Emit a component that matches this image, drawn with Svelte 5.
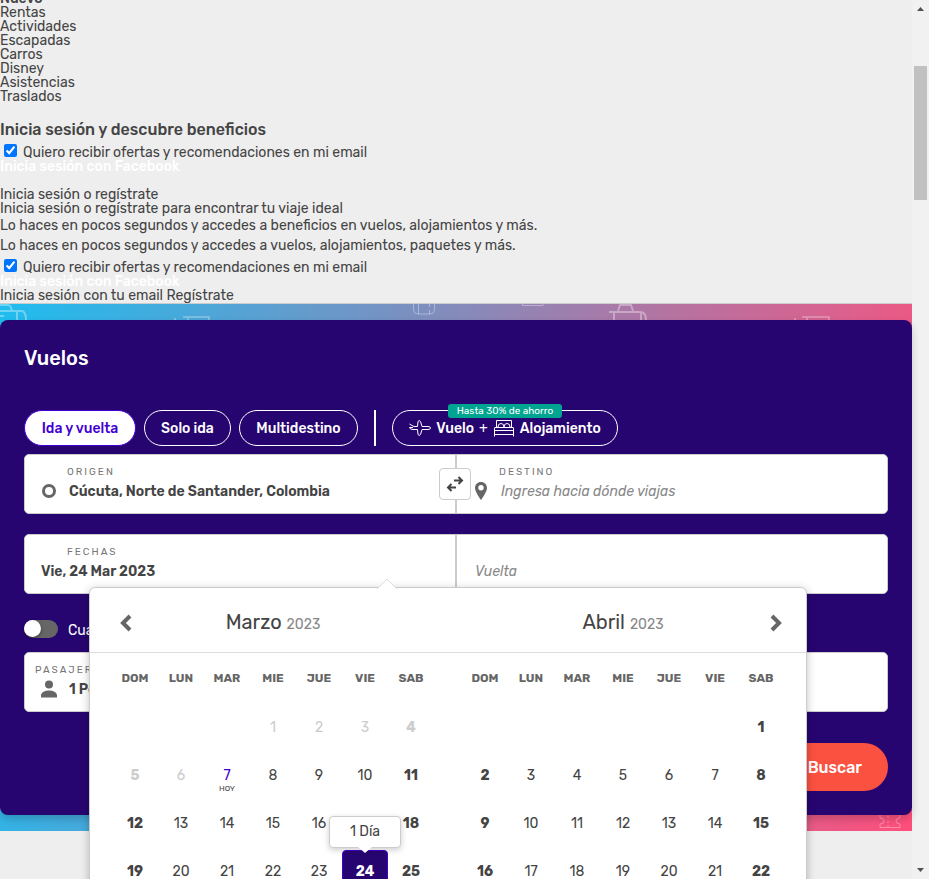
<script>
  const products = ['Rentas', 'Actividades', 'Escapadas', 'Carros', 'Disney', 'Asistencias', 'Traslados'];
  const weekdays = ['DOM', 'LUN', 'MAR', 'MIE', 'JUE', 'VIE', 'SAB'];

  // offset: how many empty cells come before day 1
  function buildWeeks(offset, count) {
    return Array.from({ length: count }, (_, w) =>
      Array.from({ length: 7 }, (_, d) => {
        const day = w * 7 + d - offset + 1;
        return day > 0 ? day : null;
      })
    );
  }

  const months = [
    { name: 'Marzo', year: 2023, weeks: buildWeeks(3, 4), today: 7 },
    { name: 'Abril', year: 2023, weeks: buildWeeks(6, 4), today: 0 }
  ];

  let selected = $state(24);
  let origin = $state('Cúcuta, Norte de Santander, Colombia');
  let departure = $state('Vie, 24 Mar 2023');
  let passengers = $state('1 Persona');
</script>

<div class="window">
  <div class="page">
    <nav>
      <ul class="products">
        <li><strong>Nuevo</strong></li>
        {#each products as product}
          <li>{product}</li>
        {/each}
      </ul>
    </nav>

    <section class="login">
      <h2>Inicia sesión y descubre beneficios</h2>
      <label class="check"><input type="checkbox" checked /><span>Quiero recibir ofertas y recomendaciones en mi email</span></label>
      <a class="facebook" href="#facebook">Inicia sesión con Facebook</a>
      <div class="register">
        <div>Inicia sesión o regístrate</div>
        <div>Inicia sesión o regístrate para encontrar tu viaje ideal</div>
        <p>Lo haces en pocos segundos y accedes a beneficios en vuelos, alojamientos y más.</p>
        <p>Lo haces en pocos segundos y accedes a vuelos, alojamientos, paquetes y más.</p>
      </div>
      <label class="check"><input type="checkbox" checked /><span>Quiero recibir ofertas y recomendaciones en mi email</span></label>
      <a class="facebook" href="#facebook">Inicia sesión con Facebook</a>
      <div class="plain"><a href="#email">Inicia sesión con tu email</a> <a href="#registro">Regístrate</a></div>
    </section>

    <main class="banner">
      <svg class="pattern top" width="912" height="16" viewBox="0 0 912 16" aria-hidden="true">
        <path d="M0 1H8Q11 1 12 7M0 7H22Q26 8 26 16M17 8V16M0 12H4" />
        <path d="M183 13H209V16M188 13V16M175 16V14" stroke-width="1.6" />
        <path d="M413.500 0V6Q414 10 418 10H430Q434 10 434.500 6V0M418.500 0V10M429.500 0V3M429.500 6V10" stroke-width="1" />
        <path d="M522.500 0V1.500H543V0" stroke-width="1" />
        <path d="M609 8H640Q646 8 646 16M618 7L620 1H631L633 7M614 8V16M641 9V16" />
        <path d="M802 13H829V16M807 13V16M795 16V14" stroke-width="1.6" />
      </svg>
      <svg class="pattern bottom" width="22" height="14" viewBox="0 0 22 14" aria-hidden="true">
        <path d="M1 0V3Q5 3 5 6T1 9V12.500H21V9Q17 9 17 6T21 3V0M9 1V3M9 6V8M9 10V12" stroke-width="1" />
      </svg>

      <form class="panel" onsubmit={(e) => e.preventDefault()}>
        <h1>Vuelos</h1>
        <div class="tabs">
          <button type="button" class="tab active">Ida y vuelta</button>
          <button type="button" class="tab one-way">Solo ida</button>
          <button type="button" class="tab multi">Multidestino</button>
          <span class="bar"></span>
          <button type="button" class="tab combo">
            <span class="saving">Hasta 30% de ahorro</span>
            <svg width="22" height="18" viewBox="0 0 22 18" aria-hidden="true">
              <path d="M.5 5L3 6.500 5 7.500H8.500L9 2.500Q10 .500 11.500 2.500L13 7.500H19Q21.500 7.500 21.500 9T19 10.500H13L11.500 15.500Q10 17.500 9 15.500L8.500 10.500H4Q1 10.500 .5 8.500H4" />
            </svg>
            <b>Vuelo</b><i>+</i>
            <svg class="bed" width="22" height="18" viewBox="0 0 22 18" aria-hidden="true">
              <path d="M3.500 8V1.500H18.500V8M1.500 17.500V9Q1.500 8.500 2 8.500H20Q20.500 8.500 20.500 9V17.500M1.500 11.500H20.500M1.500 15.500H20.500M5 8Q5 4.500 8 4.500T11 8Q11 4.500 14 4.500T17 8" />
            </svg>
            <b>Alojamiento</b>
          </button>
        </div>

        <div class="fields">
          <div class="field">
            <label for="origin">ORIGEN</label>
            <div class="row">
              <svg width="16" height="16" viewBox="0 0 16 16" aria-hidden="true"><circle cx="8" cy="8" r="5.500" fill="none" stroke="#666" stroke-width="3" /></svg>
              <input id="origin" type="text" bind:value={origin} />
            </div>
          </div>
          <div class="field destination">
            <label for="destination">DESTINO</label>
            <div class="row">
              <svg width="16" height="20" viewBox="0 0 16 20" aria-hidden="true"><path d="M8 1C4.500 1 2 3.600 2 7C2 11 8 19 8 19S14 11 14 7C14 3.600 11.500 1 8 1ZM8 4A2.700 2.700 0 1 1 8 9.400A2.700 2.700 0 1 1 8 4Z" fill="#666" fill-rule="evenodd" /></svg>
              <input id="destination" type="text" placeholder="Ingresa hacia dónde viajas" />
            </div>
          </div>
          <button type="button" class="swap" aria-label="Intercambiar">
            <svg width="18" height="18" viewBox="0 0 18 18" aria-hidden="true"><path d="M8 5.500H16M12.500 2L16 5.500L12.500 9M10 12.500H2M5.500 9L2 12.500L5.500 16" fill="none" stroke="#444" stroke-width="2" /></svg>
          </button>
        </div>

        <div class="fields dates">
          <div class="field">
            <label for="departure">FECHAS</label>
            <div class="row"><input id="departure" type="text" bind:value={departure} /></div>
          </div>
          <div class="field return">
            <div class="row"><input type="text" placeholder="Vuelta" aria-label="Vuelta" /></div>
          </div>

          <div class="calendar">
            <svg class="notch" width="20" height="11" viewBox="0 0 20 11" aria-hidden="true"><path d="M0 11L10 1L20 11" fill="#fff" stroke="#ddd" /></svg>
            <div class="calendar-head">
              <button type="button" class="arrow" aria-label="Mes anterior"><svg width="12" height="18" viewBox="0 0 12 18"><path d="M10 2L3 9L10 16" /></svg></button>
              {#each months as month}
                <h3>{month.name} <small>{month.year}</small></h3>
              {/each}
              <button type="button" class="arrow next" aria-label="Mes siguiente"><svg width="12" height="18" viewBox="0 0 12 18"><path d="M2 2L9 9L2 16" /></svg></button>
            </div>
            <div class="months">
              {#each months as month, m}
                <table>
                  <thead>
                    <tr>{#each weekdays as name}<th scope="col">{name}</th>{/each}</tr>
                  </thead>
                  <tbody>
                    {#each month.weeks as week}
                      <tr>
                        {#each week as day, d}
                          <td>
                            {#if day}
                              <button
                                type="button"
                                class="day"
                                class:weekend={d === 0 || d === 6}
                                class:past={day < month.today}
                                class:today={day === month.today}
                                class:selected={m === 0 && day === selected}
                                disabled={day < month.today}
                                onclick={() => { if (m === 0) selected = day; }}
                              >{day}</button>
                              {#if day === month.today}<span class="hoy">HOY</span>{/if}
                              {#if m === 0 && day === selected}
                                <span class="tip">1 Día</span>
                              {/if}
                            {/if}
                          </td>
                        {/each}
                      </tr>
                    {/each}
                  </tbody>
                </table>
              {/each}
            </div>
          </div>
        </div>

        <label class="switch"><input type="checkbox" /><span>Cualquier fecha</span></label>

        <div class="fields">
          <div class="field passengers">
            <label for="passengers">PASAJEROS Y CLASE</label>
            <div class="row">
              <svg width="18" height="18" viewBox="0 0 18 18" aria-hidden="true"><circle cx="9" cy="4.500" r="4" fill="#666" /><path d="M1 17.500V15Q2 10.500 9 10.500T17 15V17.500Z" fill="#666" /></svg>
              <input id="passengers" type="text" bind:value={passengers} />
            </div>
          </div>
        </div>

        <div class="actions"><button type="submit" class="search">Buscar</button></div>
      </form>
    </main>
  </div>

  <div class="scroll" aria-hidden="true">
    <svg width="17" height="17" viewBox="0 0 17 17"><path d="M5 11L8.500 7L12 11Z" fill="#505050" /></svg>
    <div class="track"><div class="thumb"></div></div>
    <svg width="17" height="17" viewBox="0 0 17 17"><path d="M5 6L8.500 10L12 6Z" fill="#505050" /></svg>
  </div>
</div>

<style>
  .window {
    display: flex;
    height: 100vh;
    overflow: hidden;
    background: #eee;
    color: #444;
    font: 14px/14px Rubik, Roboto, sans-serif;
  }
  .page { flex: 1; min-width: 0; }
  .window :is(button, input) { font-family: inherit; box-sizing: border-box; }
  a { color: inherit; text-decoration: none; }

  .products { list-style: none; margin: -8px 0 0; padding: 0; }
  .products strong { font-weight: 500; }

  h2 { margin: 16px 0 4px; font-size: 16px; line-height: 20px; font-weight: 500; }
  .check { display: flex; gap: 6px; height: 16px; line-height: 18px; }
  .check input { width: 13px; height: 13px; margin: 0 0 0 4px; }
  .facebook { display: block; color: #fff; font-weight: 500; }
  .register { margin: 14px 0 3px; }
  .register p { margin: 0; line-height: 20px; }

  .banner {
    position: relative;
    padding: 16px 0;
    border-top: 1px solid #ccc;
    background: linear-gradient(100deg, #1fbdf0, #ff4f7b);
  }
  .pattern { position: absolute; fill: none; stroke: rgba(255, 255, 255, .35); stroke-width: 2; }
  .top { top: 0; left: 0; }
  .bottom { right: 11px; bottom: 2px; }

  .panel {
    position: relative;
    padding: 26px 24px 24px;
    border-radius: 8px;
    background: #270570;
    box-shadow: 0 4px 8px rgba(0, 0, 0, .18);
  }
  h1 { margin: 0 0 40px; color: #fff; font-size: 20px; line-height: 24px; font-weight: 500; }

  .tabs { display: flex; gap: 8px; margin-bottom: 8px; }
  .tab {
    position: relative;
    display: flex;
    align-items: center;
    justify-content: center;
    height: 36px;
    padding: 0;
    border: 1px solid #fff;
    border-radius: 18px;
    background: none;
    color: #fff;
    font-size: 14px;
    font-weight: 500;
  }
  .active { width: 112px; background: #fff; border-color: #4300d2; color: #4300d2; }
  .one-way { width: 87px; }
  .multi { width: 119px; }
  .bar { width: 2px; margin: 0 8px; background: #fff; }
  .combo { width: 226px; gap: 5px; }
  .combo svg { fill: none; stroke: #fff; }
  .combo b { font-weight: 500; }
  .combo i { font-style: normal; font-weight: 400; }
  .saving {
    position: absolute;
    top: -7px;
    left: 50%;
    width: 114px;
    transform: translateX(-50%);
    border-radius: 3px;
    background: #00a591;
    font-size: 10px;
    font-weight: 400;
    line-height: 14px;
  }

  .fields {
    position: relative;
    display: flex;
    height: 58px;
    border: 1px solid #ccc;
    border-radius: 5px;
    background: #fff;
  }
  .dates { margin: 20px 0 26px; }
  .field { flex: 1; min-width: 0; padding: 11px 0 0 16px; }
  .field + .field { border-left: 2px solid #ccc; }
  .field label {
    display: block;
    margin-left: 26px;
    color: #777;
    font-size: 10px;
    line-height: 12px;
    letter-spacing: 2px;
  }
  .field .row { display: flex; align-items: center; height: 26px; gap: 12px; }
  .field input {
    flex: 1;
    min-width: 0;
    padding: 0;
    border: 0;
    outline: 0;
    background: none;
    color: #444;
    font-size: 14px;
    font-weight: 600;
  }
  .field input::placeholder { color: #888; opacity: 1; font-weight: 400; font-style: italic; }
  .return .row { padding: 12px 0 0 2px; }
  .passengers { padding-left: 10px; }
  .passengers label { margin-left: 0; }
  .passengers .row { padding-left: 5px; gap: 11px; }

  .swap {
    position: absolute;
    top: 13px;
    left: calc(50% - 17px);
    display: grid;
    place-items: center;
    width: 32px;
    height: 32px;
    padding: 0;
    border: 1px solid #ccc;
    border-radius: 4px;
    background: #fff;
  }

  .calendar {
    position: absolute;
    z-index: 2;
    top: 52px;
    left: 64px;
    width: 716px;
    border: 1px solid #ccc;
    border-radius: 6px;
    background: #fff;
    box-shadow: 0 2px 8px rgba(0, 0, 0, .25);
  }
  .notch { position: absolute; top: -10px; left: 287px; }
  .calendar-head {
    position: relative;
    display: flex;
    gap: 28px;
    padding: 0 22px;
    border-bottom: 1px solid #ddd;
  }
  h3 { flex: 1; height: 64px; margin: 0; padding-top: 2px; box-sizing: border-box; font-size: 20px; font-weight: 400; line-height: 64px; text-align: center; }
  h3 small { color: #888; font-size: 14px; }
  .arrow { position: absolute; top: 23px; left: 24px; height: 24px; padding: 0 6px; border: 0; background: none; }
  .next { left: auto; right: 18px; }
  .arrow svg { display: block; fill: none; stroke: #666; stroke-width: 4; }

  .months { display: flex; gap: 28px; padding: 0 22px; }
  table { flex: 1; width: 322px; table-layout: fixed; border-collapse: collapse; }
  th { height: 50px; padding: 0; color: #666; font-size: 12px; font-weight: 700; }
  td { position: relative; height: 48px; padding: 0; text-align: center; }
  .day {
    display: block;
    width: 100%;
    height: 42px;
    padding: 0;
    border: 0;
    border-radius: 4px;
    background: none;
    color: #444;
    font-size: 14px;
  }
  .weekend { font-weight: 700; }
  .past { color: #ccc; }
  .today { color: #4300d2; }
  .selected { border: 1px solid #4300d2; background: #270570; color: #fff; font-weight: 700; }
  .hoy { position: absolute; right: 0; bottom: 5px; left: 0; font-size: 8px; line-height: 10px; }
  .tip {
    position: absolute;
    bottom: 47px;
    left: 50%;
    width: 70px;
    transform: translateX(-50%);
    border: 1px solid #ccc;
    border-radius: 4px;
    background: #fff;
    box-shadow: 0 2px 6px rgba(0, 0, 0, .2);
    line-height: 30px;
  }
  .tip::after {
    content: '';
    position: absolute;
    top: 100%;
    left: 50%;
    margin-left: -7px;
    border: 7px solid transparent;
    border-top: 6px solid #fff;
    border-bottom: 0;
  }

  .switch { display: flex; align-items: center; gap: 10px; height: 18px; margin-bottom: 14px; color: #fff; line-height: 18px; }
  .switch span { padding-top: 3px; }
  .switch input {
    appearance: none;
    width: 34px;
    height: 18px;
    margin: 0;
    border-radius: 9px;
    background: #666;
  }
  .switch input::before {
    content: '';
    display: block;
    width: 17px;
    height: 17px;
    border-radius: 50%;
    background: #fff;
    box-shadow: 0 1px 3px rgba(0, 0, 0, .5);
  }

  .actions { display: flex; justify-content: flex-end; margin-top: 31px; }
  .search {
    height: 48px;
    padding: 0 26px 0 50px;
    border: 0;
    border-radius: 24px;
    background: #fb5140;
    color: #fff;
    font-size: 16px;
    font-weight: 500;
  }

  .scroll { display: flex; flex-direction: column; width: 17px; background: #f1f1f1; }
  .scroll svg { display: block; }
  .track { flex: 1; padding: 49px 2px 0; }
  .thumb { height: 134px; background: #c1c1c1; }
</style>
